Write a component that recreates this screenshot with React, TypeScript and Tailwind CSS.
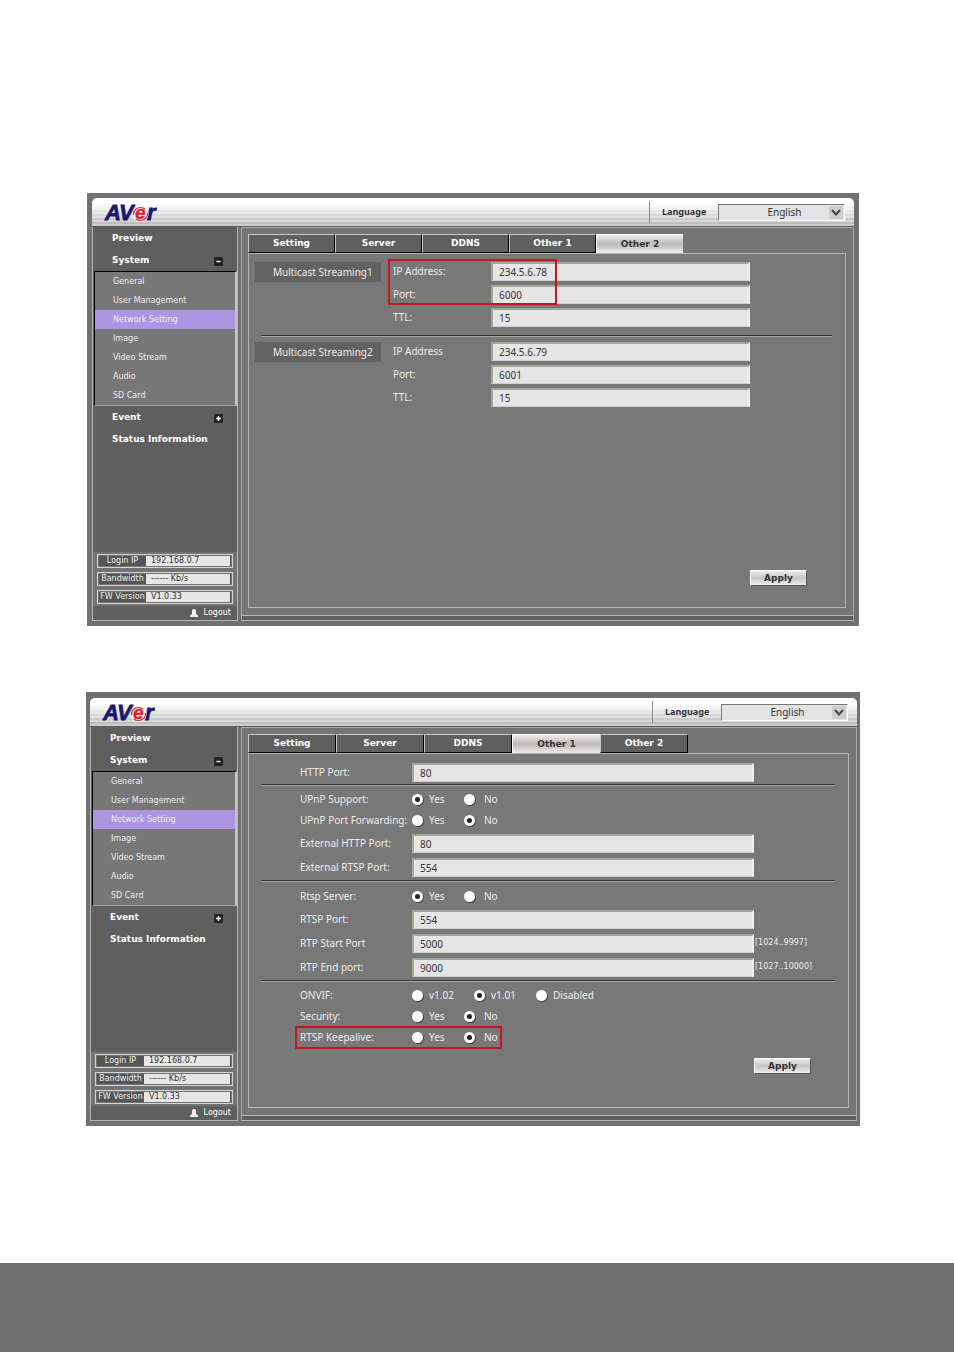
import { useId, useState, type ReactNode } from "react";
import clsx from "clsx";

const TABS = ["Setting", "Server", "DDNS", "Other 1", "Other 2"];

const SYSTEM_ITEMS = ["General", "User Management", "Network Setting", "Image", "Video Stream", "Audio", "SD Card"];

const STATUS_ROWS = [
  { label: "Login IP", value: "192.168.0.7" },
  { label: "Bandwidth", value: "------ Kb/s" },
  { label: "FW Version", value: "V1.0.33" },
];

const STREAMS = [
  { name: "Multicast Streaming1", ipLabel: "IP Address:", ip: "234.5.6.78", port: "6000", ttl: "15" },
  { name: "Multicast Streaming2", ipLabel: "IP Address", ip: "234.5.6.79", port: "6001", ttl: "15" },
];

function Logo() {
  return (
    <svg width="54" height="20" viewBox="0 0 54 20" className="overflow-visible" role="img" aria-label="AVer">
      <g fontFamily="Liberation Sans, sans-serif" fontWeight="bold" fontStyle="italic">
        <g fontSize="22" fill="#1c1670" stroke="#1c1670" strokeWidth="0.8">
          <text x="0" y="17">A</text>
          <text x="14" y="17">V</text>
          <text x="42" y="17">r</text>
        </g>
        <circle cx="35.5" cy="11" r="8" fill="#fff" />
        <text x="30" y="16" fontSize="19" fill="#d8232f" stroke="#d8232f" strokeWidth="0.4">e</text>
      </g>
      <path d="M28.5 12c-.5-4 2.500-7.500 7-7.500 2 0 3.500.6 4.800 1.800M42.500 10c.5 4-2.500 7.500-7 7.500-2 0-3.500-.6-4.800-1.800" fill="none" stroke="#d8232f" strokeWidth="1.2" />
    </svg>
  );
}

function ToggleIcon({ open }: { open: boolean }) {
  return (
    <svg width="9" height="9" viewBox="0 0 9 9">
      <rect width="9" height="9" rx="1.5" fill="#222" />
      <path d={open ? "M2.5 4.5h4" : "M2 4.5h5M4.5 2v5"} stroke="#fff" strokeWidth="1.4" />
    </svg>
  );
}

function Header() {
  const id = useId();
  return (
    <header className="flex h-[29px] justify-between rounded-t-[5px] border-b border-[#5c5c5c] bg-[repeating-linear-gradient(to_bottom,transparent_0,transparent_2px,rgba(255,255,255,0.3)_2px,rgba(255,255,255,0.3)_4px),linear-gradient(to_bottom,#ffffff_20%,#b5b5b5)] pl-[13px] pr-[9px]">
      <div className="pt-[5px]">
        <Logo />
      </div>
      <div className="my-[3px] flex items-center gap-[10px] border-l border-[#8a8a8a] pl-3">
        <label htmlFor={id} className="w-[46px] text-[9px] font-bold text-[#333]">
          Language
        </label>
        <div className="relative">
          <select
            id={id}
            className="block h-[17px] w-[127px] appearance-none border border-b-white border-l-[#777] border-r-white border-t-[#777] bg-[#e3e3e3] pl-[6px] text-center text-[10px] leading-[15px] text-[#333]"
          >
            <option>English</option>
          </select>
          <svg width="14" height="13" viewBox="0 0 14 13" className="pointer-events-none absolute right-[2px] top-[2px] bg-[#cdcdcd]">
            <path d="M3 4l4 4.5L11 4" fill="none" stroke="#444" strokeWidth="2" />
          </svg>
        </div>
      </div>
    </header>
  );
}

function Sidebar({ className }: { className: string }) {
  const heading = "flex h-[22px] w-full items-center justify-between pl-[19px] pr-[14px] pt-[2px] font-bold text-[9px] text-white";
  return (
    <nav
      className={clsx(
        "flex shrink-0 flex-col border border-t-0 border-[#b5b5b5] bg-[#5f5f5f] font-['DejaVu_Sans',sans-serif] text-[8px]",
        className
      )}
    >
      <button className={heading}>Preview</button>
      <button className={heading}>
        System <ToggleIcon open />
      </button>
      <ul className="ml-px border-b border-l border-r-2 border-t border-b-[#a0a0a0] border-l-black border-r-[#c4c4c4] border-t-black bg-[#777]">
        {SYSTEM_ITEMS.map((item) => (
          <li key={item}>
            <a
              href="#"
              className={clsx("block h-[19px] pl-[18px] leading-[19px] text-[#ededed]", item === "Network Setting" && "bg-[#ae95e3]")}
            >
              {item}
            </a>
          </li>
        ))}
      </ul>
      <button className={heading}>
        Event <ToggleIcon open={false} />
      </button>
      <button className={heading}>Status Information</button>

      <div className="mt-auto flex flex-col gap-1 bg-[#737373] px-1 py-[2px]">
        {STATUS_ROWS.map((row) => (
          <dl key={row.label} className="flex h-[14px] border border-[#d5d5d5] p-px leading-[10px]">
            <dt className="w-[47px] whitespace-nowrap bg-[#555] text-center text-[#eee]">{row.label}</dt>
            <dd className="flex-1 whitespace-pre border-r border-[#555] bg-[#e6e6e6] pl-[5px] text-[#333]">{row.value}</dd>
          </dl>
        ))}
      </div>
      <button className="flex h-[14px] items-center justify-end gap-[6px] pr-[6px] leading-[14px] text-white">
        <svg width="8" height="8" viewBox="0 0 8 8" fill="#eee">
          <rect x="2" width="4" height="6" rx="1.5" />
          <path d="M0 8V6.500L2 5h4l2 1.500V8z" />
        </svg>
        Logout
      </button>
    </nav>
  );
}

function Tabs({ active, tabClass }: { active: string; tabClass: string }) {
  return (
    <div role="tablist" className="flex">
      {TABS.map((tab) => (
        <button
          key={tab}
          role="tab"
          aria-selected={tab === active}
          className={clsx(
            "h-[19px] border-l border-t pt-px font-['DejaVu_Sans',sans-serif] text-[9px] font-bold",
            tabClass,
            tab === active
              ? "border-white bg-linear-to-b from-[#ededed] via-[#bdb8b8] to-[#ececec] text-[#333]"
              : "border-b border-r border-b-black border-l-[#c8c8c8] border-r-black border-t-[#c8c8c8] bg-[#5f5f5f] text-white"
          )}
        >
          {tab}
        </button>
      ))}
    </div>
  );
}

type ScreenProps = {
  activeTab: string;
  className: string;
  sidebarClass: string;
  tabClass: string;
  children: ReactNode;
};

function Screen({ activeTab, className, sidebarClass, tabClass, children }: ScreenProps) {
  return (
    <section className={clsx("bg-[#717171] pb-[5px]", className)}>
      <Header />
      <div className="flex gap-[3px]">
        <Sidebar className={sidebarClass} />
        <main className="flex min-w-0 flex-1 flex-col border-x border-t border-[#a8a8a8] bg-[#757575]">
          <div className="flex flex-1 flex-col pb-[7px] pl-[6px] pr-[7px] pt-[6px]">
            <Tabs active={activeTab} tabClass={tabClass} />
            <form className="flex min-h-[355px] flex-col border border-[#b5b5b5] bg-[#787878]" onSubmit={(e) => e.preventDefault()}>
              {children}
            </form>
          </div>
          <div className="h-[6px] border-y border-[#b5b5b5] bg-[#5f5f5f]" />
        </main>
      </div>
    </section>
  );
}

function TextField({ id, value }: { id: string; value: string }) {
  return (
    <input
      id={id}
      type="text"
      defaultValue={value}
      className="h-[19px] min-w-0 flex-1 border-2 border-b border-b-[#cfcfcf] border-l-[#a5a598] border-r-[#f0f0f0] border-t-[#a5a598] bg-[#e5e5e5] pl-[6px] text-[10px] text-[#333]"
    />
  );
}

function ApplyButton({ className }: { className: string }) {
  return (
    <button
      className={clsx(
        "mt-auto h-4 w-[57px] self-end border border-b-[#555] border-l-white border-r-[#555] border-t-white bg-linear-to-b from-[#ececec] via-[#c6c6c6] to-[#ededed] font-['DejaVu_Sans',sans-serif] text-[9px] font-bold leading-[14px] text-[#333]",
        className
      )}
    >
      Apply
    </button>
  );
}

function Divider() {
  return <hr className="ml-3 mr-[13px] h-[2px] border-b border-t border-b-[#a8a8a8] border-t-[#333]" />;
}

function StreamRow({ label, value }: { label: string; value: string }) {
  const id = useId();
  return (
    <div className="flex h-[23px] items-center">
      <label htmlFor={id} className="w-[98px]">
        {label}
      </label>
      <TextField id={id} value={value} />
    </div>
  );
}

function StreamGroup({ stream, marked }: { stream: (typeof STREAMS)[number]; marked?: boolean }) {
  return (
    <fieldset className="flex gap-3 pl-[6px] pr-[95px]">
      <div className="mt-[2px] h-5 w-[126px] bg-[#626262] pl-[18px] leading-5">{stream.name}</div>
      <div className="relative flex-1">
        <StreamRow label={stream.ipLabel} value={stream.ip} />
        <StreamRow label="Port:" value={stream.port} />
        <StreamRow label="TTL:" value={stream.ttl} />
        {marked && <div className="pointer-events-none absolute -left-[5px] -top-px h-[46px] w-[169px] border-2 border-[#c4161c]" />}
      </div>
    </fieldset>
  );
}

function MulticastForm() {
  return (
    <div className="flex flex-1 flex-col pt-[6px] text-[10px] text-[#ededed]">
      <StreamGroup stream={STREAMS[0]} marked />
      <div className="pb-[3px] pt-[6px]">
        <Divider />
      </div>
      <StreamGroup stream={STREAMS[1]} />
      <ApplyButton className="mb-[21px] mr-[38px]" />
    </div>
  );
}

function PortRow({ label, value, hint }: { label: string; value: string; hint?: string }) {
  const id = useId();
  return (
    <div className="flex h-6 items-center pl-[51px]">
      <label htmlFor={id} className="w-28">
        {label}
      </label>
      <TextField id={id} value={value} />
      <span className="w-[94px] pl-px font-['DejaVu_Sans',sans-serif] text-[8px]">{hint}</span>
    </div>
  );
}

type RadioRowProps = {
  label: string;
  options?: string[];
  initial: string;
  wide?: boolean;
  marked?: boolean;
};

function RadioRow({ label, options = ["Yes", "No"], initial, wide, marked }: RadioRowProps) {
  const [value, setValue] = useState(initial);
  const id = useId();
  return (
    <div role="radiogroup" aria-labelledby={id} className="relative flex h-[21px] items-center pl-[51px]">
      <span id={id} className="w-28 whitespace-nowrap">
        {label}
      </span>
      {options.map((option) => (
        <label key={option} className={clsx("flex items-center gap-[6px]", wide ? "w-[62px]" : "w-[52px] last-of-type:gap-[9px]")}>
          <input
            type="radio"
            name={id}
            checked={value === option}
            onChange={() => setValue(option)}
            className="size-[11px] shrink-0 appearance-none rounded-full border-[3px] border-white bg-white shadow-[1px_1px_0_#444] checked:bg-[#222]"
          />
          {option}
        </label>
      ))}
      {marked && <div className="pointer-events-none absolute -top-px left-[46px] h-[23px] w-[207px] border-2 border-[#c4161c]" />}
    </div>
  );
}

function PortsForm() {
  return (
    <div className="flex flex-1 flex-col pt-[6px] text-[10px] text-[#ededed]">
      <PortRow label="HTTP Port:" value="80" />
      <Divider />
      <div className="pb-px pt-[3px]">
        <RadioRow label="UPnP Support:" initial="Yes" />
        <RadioRow label="UPnP Port Forwarding:" initial="No" />
        <PortRow label="External HTTP Port:" value="80" />
        <PortRow label="External RTSP Port:" value="554" />
      </div>
      <Divider />
      <div className="pb-px pt-1">
        <RadioRow label="Rtsp Server:" initial="Yes" />
        <PortRow label="RTSP Port:" value="554" />
        <PortRow label="RTP Start Port" value="5000" hint="[1024..9997]" />
        <PortRow label="RTP End port:" value="9000" hint="[1027..10000]" />
      </div>
      <Divider />
      <div className="pt-[3px]">
        <RadioRow label="ONVIF:" options={["v1.02", "v1.01", "Disabled"]} initial="v1.01" wide />
        <RadioRow label="Security:" initial="No" />
        <RadioRow label="RTSP Keepalive:" initial="No" marked />
      </div>
      <ApplyButton className="mb-[33px] mr-[37px]" />
    </div>
  );
}

export default function App() {
  return (
    <div className="flex min-h-screen flex-col bg-white font-['Noto_Sans',sans-serif]">
      <div className="pb-[137px] pl-[86px] pr-[94px] pt-[193px]">
        <Screen activeTab="Other 2" className="ml-px mr-px px-[5px] pt-[5px]" sidebarClass="w-[146px]" tabClass="w-[87px]">
          <MulticastForm />
        </Screen>
        <Screen activeTab="Other 1" className="mt-[66px] pl-1 pr-[3px] pt-[6px]" sidebarClass="w-[148px]" tabClass="w-[88px]">
          <PortsForm />
        </Screen>
      </div>
      <footer className="mt-auto h-[89px] bg-[#707070]" />
    </div>
  );
}
